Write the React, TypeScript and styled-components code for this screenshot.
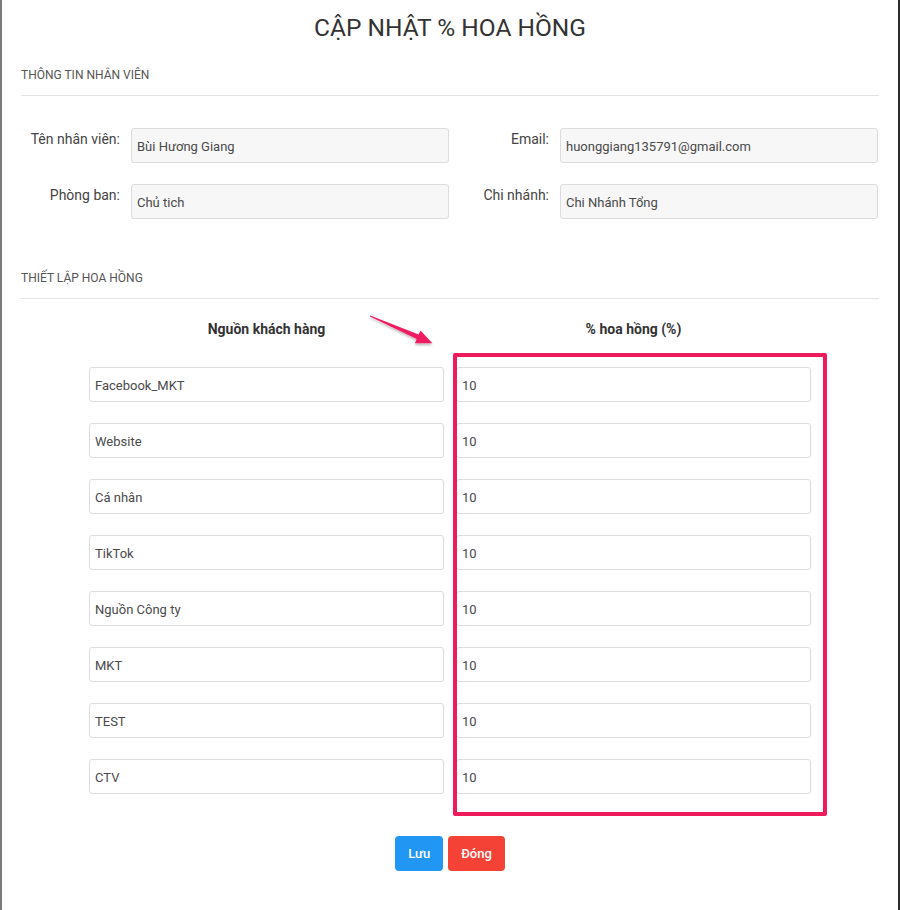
import { createGlobalStyle, styled } from 'styled-components'

const GlobalStyle = createGlobalStyle`
  body {
    margin: 0;
    background: #fff;
    font-family: Roboto, "Liberation Sans", Arial, sans-serif;
    color: #333;
  }
`

const infoFields = [
  { label: 'Tên nhân viên:', value: 'Bùi Hương Giang' },
  { label: 'Email:', value: 'huonggiang135791@gmail.com' },
  { label: 'Phòng ban:', value: 'Chủ tich' },
  { label: 'Chi nhánh:', value: 'Chi Nhánh Tổng' },
]

const sources = ['Facebook_MKT', 'Website', 'Cá nhân', 'TikTok', 'Nguồn Công ty', 'MKT', 'TEST', 'CTV']

export default function App() {
  return (
    <>
      <GlobalStyle />
      <Modal>
        <Title>CẬP NHẬT % HOA HỒNG</Title>

        <SectionHeading>Thông tin nhân viên</SectionHeading>
        <InfoGrid>
          {infoFields.map((f) => (
            <Field key={f.label}>
              <Label>{f.label}</Label>
              <TextBox $readonly>{f.value}</TextBox>
            </Field>
          ))}
        </InfoGrid>

        <SectionHeading $spaced>Thiết lập hoa hồng</SectionHeading>
        <CommissionArea>
          <CommissionGrid>
            <ColHead>Nguồn khách hàng</ColHead>
            <ColHead>% hoa hồng (%)</ColHead>
          </CommissionGrid>
          <RowsGrid>
            {sources.map((s) => (
              <Row key={s}>
                <TextBox>{s}</TextBox>
                <TextBox>10</TextBox>
              </Row>
            ))}
          </RowsGrid>

          <Arrow width="80" height="50" viewBox="0 0 80 50">
            <defs>
              <filter id="sh" x="-20%" y="-20%" width="140%" height="160%">
                <feDropShadow dx="0" dy="2" stdDeviation="1.2" floodColor="#000" floodOpacity="0.25" />
              </filter>
            </defs>
            <polygon
              points="10.2,10.4 58.7,29.5 60.5,25.4 72.4,38.2 54.9,38.2 56.7,34.1 9.8,11.6"
              fill="#f01f62"
              filter="url(#sh)"
            />
          </Arrow>
          <Highlight />
        </CommissionArea>

        <Actions>
          <Button $tone="#2196f3">Lưu</Button>
          <Button $tone="#f44336">Đóng</Button>
        </Actions>
      </Modal>
    </>
  )
}

/** style */

const Modal = styled.div`
  box-sizing: border-box;
  width: 900px;
  height: 910px;
  padding: 14px 19px 0 19px;
  border-left: 2px solid #7a7a7a;
  border-right: 2px solid #2a2a2a;
  background: #fff;
`

const Title = styled.h1`
  margin: 0;
  text-align: center;
  font-size: 24.5px;
  line-height: 28px;
  font-weight: 400;
  color: #333;
`

const SectionHeading = styled.div<{ $spaced?: boolean }>`
  margin-top: ${(p) => (p.$spaced ? '51px' : '25px')};
  padding-bottom: 12px;
  border-bottom: 1px solid #e3e3e3;
  font-size: 12px;
  line-height: 16px;
  text-transform: uppercase;
  color: #555;
`

const InfoGrid = styled.div`
  margin-top: 32px;
  display: grid;
  grid-template-columns: 429px 429px;
  row-gap: 21px;
`

const Field = styled.div`
  display: flex;
  align-items: flex-start;
  padding-right: 1px;
`

const Label = styled.div`
  width: 110px;
  flex: none;
  padding: 2px 11px 0 0;
  box-sizing: border-box;
  text-align: right;
  font-size: 14px;
  line-height: 18px;
  color: #444;
`

const TextBox = styled.div<{ $readonly?: boolean }>`
  box-sizing: border-box;
  flex: 1;
  height: 35px;
  padding: 1px 5px 0;
  display: flex;
  align-items: center;
  border: 1px solid #dcdcdc;
  border-radius: 3px;
  background: ${(p) => (p.$readonly ? '#f7f7f7' : '#fff')};
  font-size: 13px;
  color: #4a4a4a;
  white-space: nowrap;
`

const CommissionArea = styled.div`
  position: relative;
  margin-top: 21px;
`

const CommissionGrid = styled.div`
  display: grid;
  grid-template-columns: 355px 355px;
  column-gap: 12px;
  padding-left: 68px;
`

const ColHead = styled.div`
  text-align: center;
  font-size: 14px;
  line-height: 18px;
  font-weight: 700;
  color: #333;
`

const RowsGrid = styled.div`
  margin-top: 29px;
  display: flex;
  flex-direction: column;
  gap: 21px;
  padding-left: 68px;
`

const Row = styled.div`
  display: grid;
  grid-template-columns: 355px 355px;
  column-gap: 12px;
`

const Highlight = styled.div`
  position: absolute;
  left: 432px;
  top: 33px;
  width: 374px;
  height: 463px;
  box-sizing: border-box;
  border: 4px solid #ee1a5c;
  border-radius: 2px;
  pointer-events: none;
`

const Arrow = styled.svg`
  position: absolute;
  left: 339px;
  top: -15px;
  pointer-events: none;
`

const Actions = styled.div`
  margin-top: 42px;
  display: flex;
  justify-content: center;
  gap: 5px;
`

const Button = styled.button<{ $tone: string }>`
  height: 35px;
  padding: 0 13px;
  border: none;
  border-radius: 4px;
  background: ${(p) => p.$tone};
  color: #fff;
  font-family: Roboto, "Liberation Sans", Arial, sans-serif;
  font-size: 13px;
  font-weight: 500;
  cursor: pointer;
`
